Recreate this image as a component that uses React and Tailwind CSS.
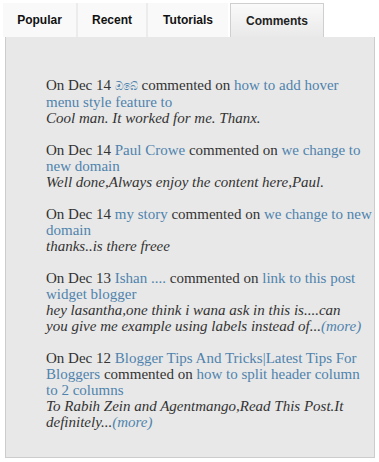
import React from "react";

const L = ({ children }) => (
  <a className="text-[#4f83ad] no-underline">{children}</a>
);

function Entry({ children }) {
  return <div className="mb-4 whitespace-nowrap">{children}</div>;
}

function I({ children }) {
  return <span className="italic">{children}</span>;
}

export default function App() {
  return (
    <div className="w-[379px] h-[462px] bg-white relative">
      <div className="flex pl-[3px] pt-[3px] h-[37px] font-['Liberation_Sans',Arial,sans-serif] text-[12px] font-bold">
        <div className="w-[75px] bg-[#f9f9f9] flex items-center justify-center text-[#111] border-r-2 border-[#ececec]">Popular</div>
        <div className="w-[70px] bg-[#f9f9f9] flex items-center justify-center text-[#111] border-r-2 border-[#ececec]">Recent</div>
        <div className="w-[80px] bg-[#f9f9f9] flex items-center justify-center text-[#111]">Tutorials</div>
        <div className="w-[94px] bg-gradient-to-b from-[#fafafa] to-[#e9e9e9] flex items-center justify-center text-[#222] border-l border-r border-t border-[#cfcfcf] ml-[2px]">Comments</div>
      </div>
      <div className="ml-[5px] w-[370px] h-[421px] bg-[#e8e8e8] border-l border-r border-b border-[#cccccc] pt-[40px] pl-[40px] font-['Liberation_Serif',Georgia,serif] text-[15px] leading-[16px] text-[#333]">
        <Entry>
          On Dec 14 <span className="text-[11px] text-[#4f83ad]">ඔබේ</span> commented on <L>how to add hover</L>
          <br />
          <L>menu style feature to</L>
          <br />
          <I>Cool man. It worked for me. Thanx.</I>
        </Entry>
        <Entry>
          On Dec 14 <L>Paul Crowe</L> commented on <L>we change to</L>
          <br />
          <L>new domain</L>
          <br />
          <I>Well done,Always enjoy the content here,Paul.</I>
        </Entry>
        <Entry>
          On Dec 14 <L>my story</L> commented on <L>we change to new</L>
          <br />
          <L>domain</L>
          <br />
          <I>thanks..is there freee</I>
        </Entry>
        <Entry>
          On Dec 13 <L>Ishan ....</L> commented on <L>link to this post</L>
          <br />
          <L>widget blogger</L>
          <br />
          <I>hey lasantha,one think i wana ask in this is....can</I>
          <br />
          <I>you give me example using labels instead of...</I>
          <L><I>(more)</I></L>
        </Entry>
        <Entry>
          On Dec 12 <L>Blogger Tips And Tricks|Latest Tips For</L>
          <br />
          <L>Bloggers</L> commented on <L>how to split header column</L>
          <br />
          <L>to 2 columns</L>
          <br />
          <I>To Rabih Zein and Agentmango,Read This Post.It</I>
          <br />
          <I>definitely...</I>
          <L><I>(more)</I></L>
        </Entry>
      </div>
    </div>
  );
}
